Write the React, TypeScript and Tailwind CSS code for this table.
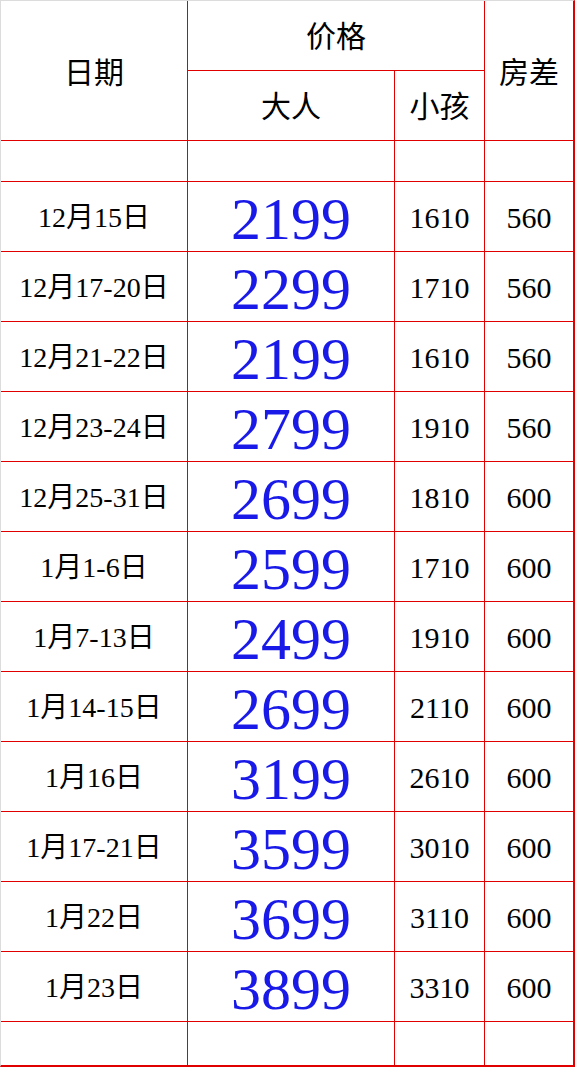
import React from "react";

const rows: [string, string, string, string][] = [
  ["12月15日", "2199", "1610", "560"],
  ["12月17-20日", "2299", "1710", "560"],
  ["12月21-22日", "2199", "1610", "560"],
  ["12月23-24日", "2799", "1910", "560"],
  ["12月25-31日", "2699", "1810", "600"],
  ["1月1-6日", "2599", "1710", "600"],
  ["1月7-13日", "2499", "1910", "600"],
  ["1月14-15日", "2699", "2110", "600"],
  ["1月16日", "3199", "2610", "600"],
  ["1月17-21日", "3599", "3010", "600"],
  ["1月22日", "3699", "3110", "600"],
  ["1月23日", "3899", "3310", "600"],
];

const font = { fontFamily: '"Liberation Serif", "Noto Sans CJK SC", serif' };

export default function App() {
  const cell = "flex items-center justify-center bg-white text-black";
  return (
    <div
      className="w-[575px] h-[1067px] bg-white border-l border-t border-l-[#dcdcdc] border-t-[#dcdcdc] border-r-2 border-r-[#e00000] border-b-2 border-b-[#e00000] box-border overflow-hidden"
      style={font}
    >
      <div className="grid gap-px bg-[#e00000] grid-cols-[186px_206px_89px_88px] grid-rows-[69px_69px_40px_repeat(12,69px)_43px]">
        <div className={`${cell} row-span-2 text-[30px] pt-[4px]`}>日期</div>
        <div className={`${cell} col-span-2 text-[30px] pt-[2px]`}>价格</div>
        <div className={`${cell} row-span-2 text-[30px] pt-[4px]`}>房差</div>
        <div className={`${cell} text-[30px] pt-[2px]`}>大人</div>
        <div className={`${cell} text-[30px] pt-[2px]`}>小孩</div>
        <div className={cell}></div>
        <div className={cell}></div>
        <div className={cell}></div>
        <div className={cell}></div>
        {rows.map((r, i) => (
          <React.Fragment key={i}>
            <div className={`${cell} text-[28px] pt-[2px]`}>{r[0]}</div>
            <div className="flex items-center justify-center bg-white text-[60px] text-[#1a1ae8] pt-[4px]">{r[1]}</div>
            <div className={`${cell} text-[30px] pt-[2px]`}>{r[2]}</div>
            <div className={`${cell} text-[30px] pt-[2px]`}>{r[3]}</div>
          </React.Fragment>
        ))}
        <div className={cell}></div>
        <div className={cell}></div>
        <div className={cell}></div>
        <div className={cell}></div>
      </div>
    </div>
  );
}
